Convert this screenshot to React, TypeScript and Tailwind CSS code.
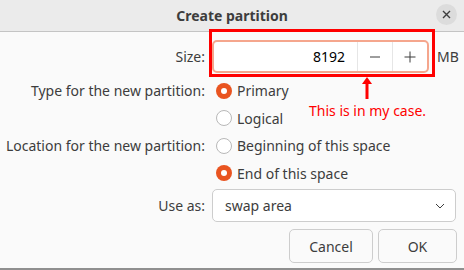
import React from 'react';

const Radio = ({ checked, label }: { checked?: boolean; label: string }) => (
  <div className="flex items-center h-[27.5px] pl-[4px]">
    {checked ? (
      <span className="w-[16px] h-[16px] rounded-full bg-[#e95420] flex items-center justify-center">
        <span className="w-[6px] h-[6px] rounded-full bg-white"></span>
      </span>
    ) : (
      <span className="w-[16px] h-[16px] rounded-full bg-white border border-[#b8b8b8]"></span>
    )}
    <span className="ml-[5px]">{label}</span>
  </div>
);

const App = () => {
  return (
    <div className="relative w-[464px] h-[270px] overflow-hidden bg-[#fafafa] text-[14px] text-[#3d3d3d]" style={{ fontFamily: '"Noto Sans", sans-serif' }}>
      {/* title bar */}
      <div className="relative h-[32px] bg-[#ebebeb] border-b border-[#c4c4c4] flex items-center justify-center">
        <span className="font-bold text-[14px] text-[#3d3d3d]">Create partition</span>
        <div className="absolute right-[7px] top-[4px] w-[21px] h-[21px] rounded-full bg-[#dcdcdc] flex items-center justify-center">
          <svg width="9" height="9" viewBox="0 0 9 9">
            <path d="M1 1 L8 8 M8 1 L1 8" stroke="#3d3d3d" strokeWidth="1.4" />
          </svg>
        </div>
      </div>

      {/* form */}
      <div className="grid grid-cols-[205px_1fr] gap-x-[7px] pt-[8px] pr-[8px]">
        <div className="h-[33px] flex items-center justify-end">Size:</div>
        <div className="flex items-center h-[33px]">
          <div className="flex w-[217px] h-[33px] rounded-[5px] border-2 border-[#f5a68d] bg-white">
            <div className="flex-1 flex items-center justify-end pr-[12px] text-black">8192</div>
            <div className="w-[35px] border-l border-[#e6e6e6] flex items-center justify-center">
              <svg width="12" height="12" viewBox="0 0 12 12"><path d="M1 6 H11" stroke="#3d3d3d" strokeWidth="1" /></svg>
            </div>
            <div className="w-[35px] border-l border-[#e6e6e6] flex items-center justify-center">
              <svg width="12" height="12" viewBox="0 0 12 12"><path d="M0.5 6 H11.5 M6 0.5 V11.5" stroke="#3d3d3d" strokeWidth="1" /></svg>
            </div>
          </div>
          <span className="ml-[8px]">MB</span>
        </div>

        <div className="mt-[4px] h-[27.5px] flex items-center justify-end">Type for the new partition:</div>
        <div className="mt-[4px]"><Radio checked label="Primary" /></div>
        <div></div>
        <div><Radio label="Logical" /></div>

        <div className="h-[27.5px] flex items-center justify-end">Location for the new partition:</div>
        <div><Radio label="Beginning of this space" /></div>
        <div></div>
        <div><Radio checked label="End of this space" /></div>

        <div className="mt-[2px] h-[33px] flex items-center justify-end">Use as:</div>
        <div className="mt-[2px] h-[33px] w-[244px] rounded-[5px] border border-[#cdcdcd] bg-white flex items-center justify-between pl-[12px] pr-[10px]">
          <span>swap area</span>
          <svg width="10" height="6" viewBox="0 0 10 6"><path d="M1 1 L5 5 L9 1" stroke="#3d3d3d" strokeWidth="1" fill="none" /></svg>
        </div>
      </div>

      <div className="flex justify-end gap-[5px] pr-[7px] mt-[7px]">
        <button className="w-[84px] h-[34px] rounded-[5px] border border-[#cdcdcd] bg-[#fafafa]">Cancel</button>
        <button className="w-[79px] h-[34px] rounded-[5px] border border-[#cdcdcd] bg-[#fafafa]">OK</button>
      </div>

      {/* window edge below dialog */}
      <div className="absolute left-0 right-0 top-[268px] h-[2px] bg-[#8f8f8f]"></div>

      {/* annotation overlay */}
      <div className="absolute left-[209px] top-[29px] w-[226px] h-[48px] border-[3px] border-[#ff0000] pointer-events-none"></div>
      <svg className="absolute left-[361px] top-[76px]" width="12" height="24" viewBox="0 0 12 24">
        <path d="M6 1 L11 8 L1 8 Z" fill="#ff0000" />
        <path d="M6 7 V23" stroke="#ff0000" strokeWidth="3" />
      </svg>
      <div className="absolute left-[309px] top-[100px] text-[#ff0000] text-[14px]">This is in my case.</div>
    </div>
  );
};

export default App;
